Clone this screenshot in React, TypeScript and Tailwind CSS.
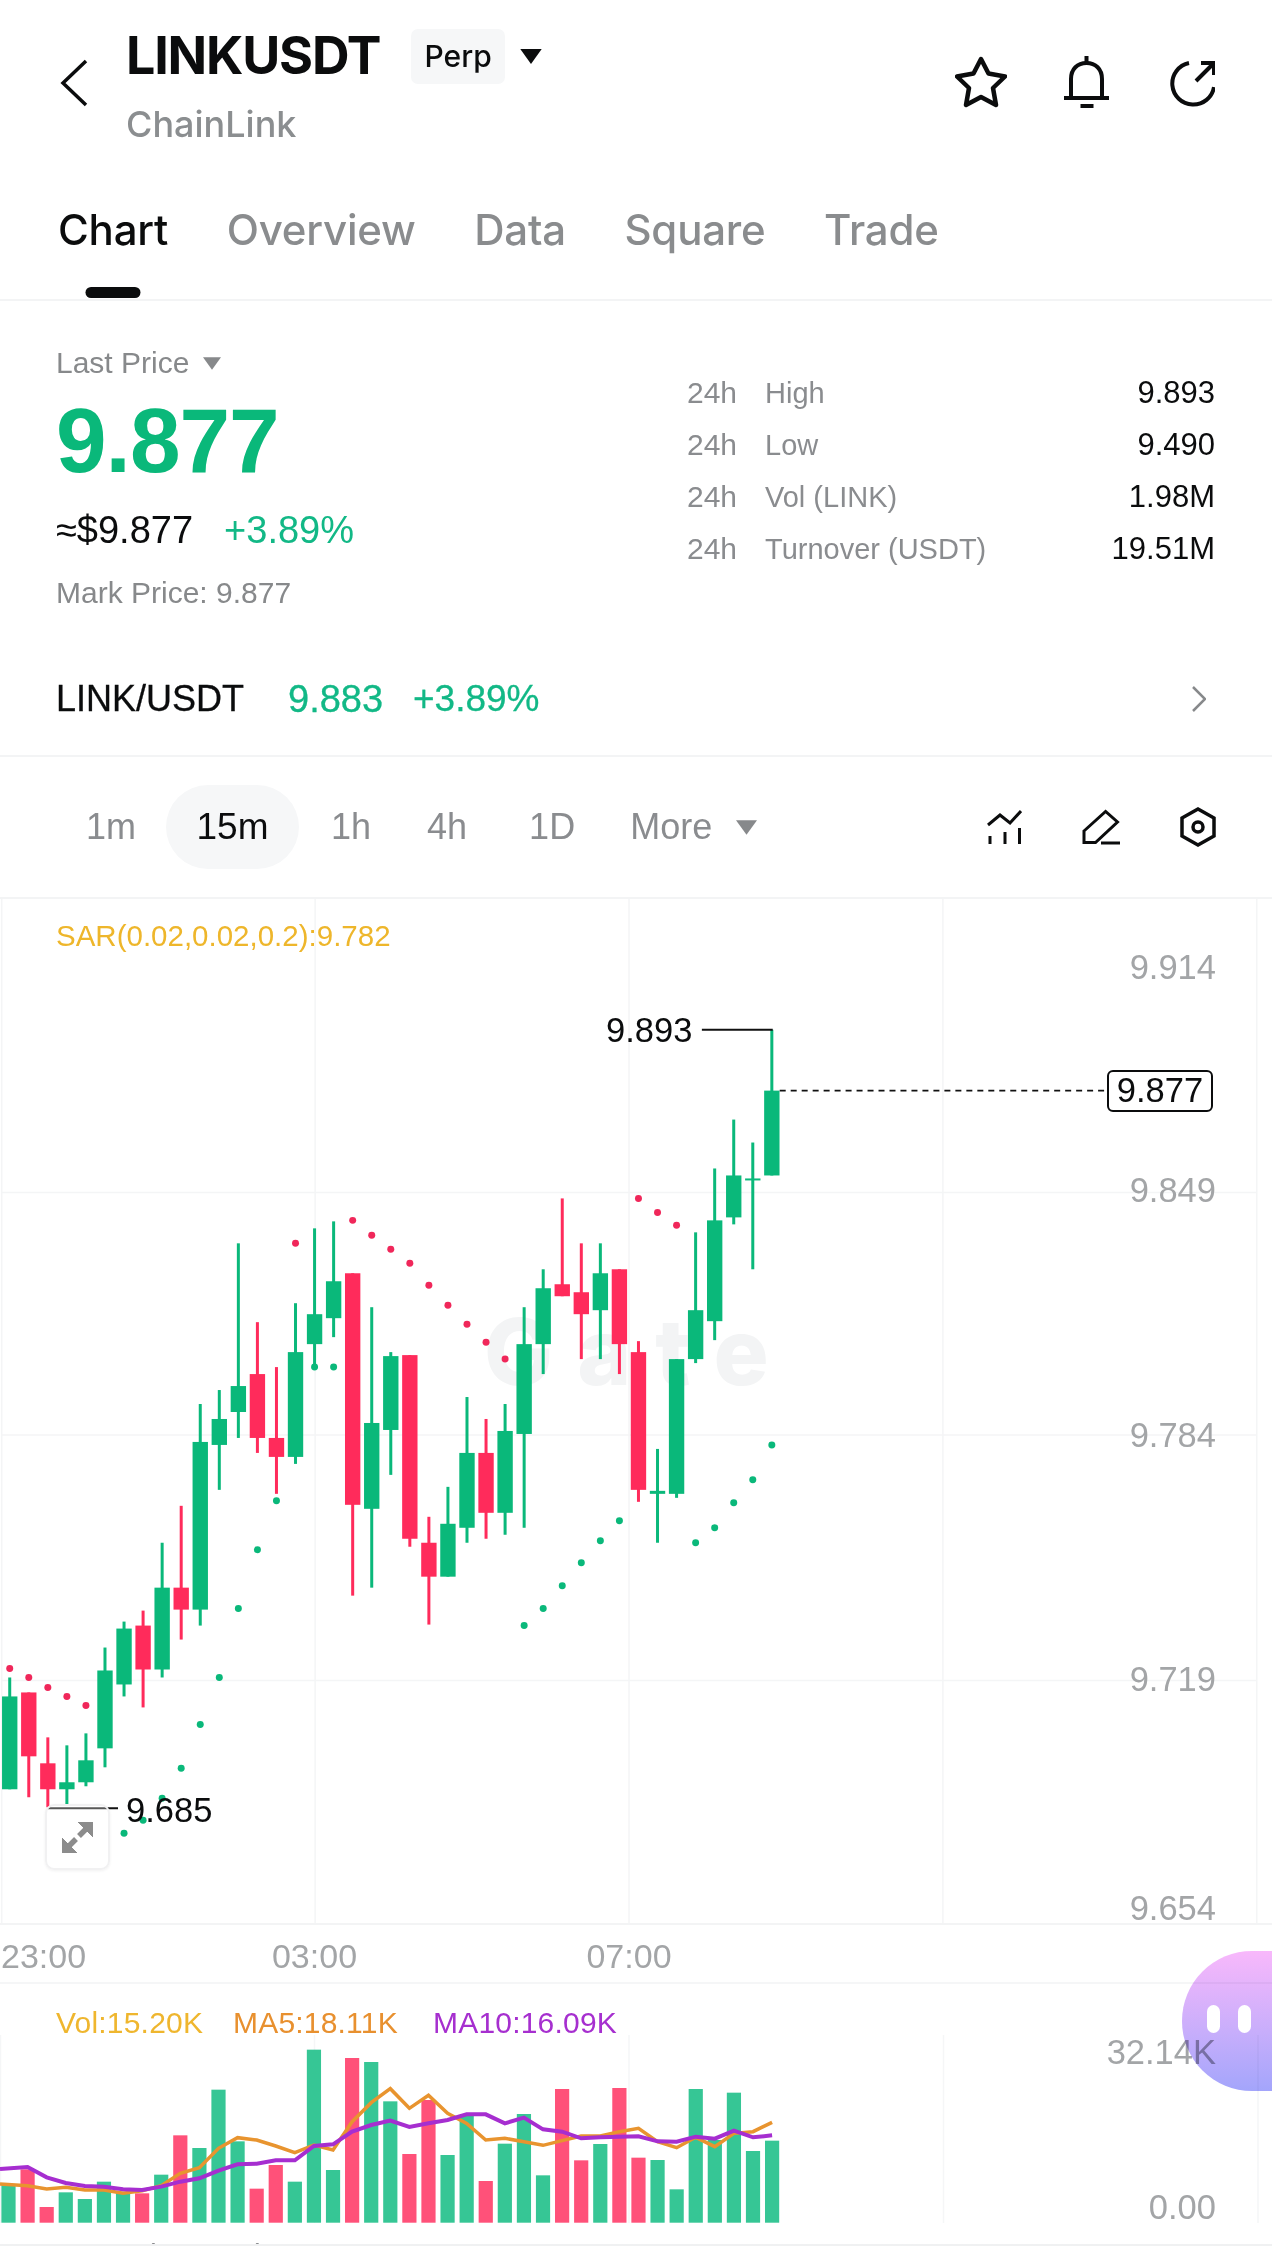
const candles: [number, number, number, number, number, "g" | "r"][] = [
  [0, 1679, 1698, 1791, 1791, "g"],
  [1, 1694, 1694, 1758, 1799, "r"],
  [2, 1739, 1765, 1791, 1809, "r"],
  [3, 1747, 1784, 1791, 1806, "g"],
  [4, 1735, 1762, 1784, 1788, "g"],
  [5, 1649, 1672, 1750, 1769, "g"],
  [6, 1623, 1630, 1686, 1698, "g"],
  [7, 1612, 1627, 1671, 1709, "r"],
  [8, 1544, 1589, 1671, 1679, "g"],
  [9, 1507, 1589, 1611, 1641, "r"],
  [10, 1405, 1443, 1611, 1627, "g"],
  [11, 1391, 1420, 1446, 1491, "g"],
  [12, 1244, 1387, 1413, 1439, "g"],
  [13, 1323, 1375, 1439, 1454, "r"],
  [14, 1368, 1439, 1458, 1495, "r"],
  [15, 1304, 1353, 1458, 1465, "g"],
  [16, 1229, 1315, 1345, 1368, "g"],
  [17, 1222, 1282, 1319, 1338, "g"],
  [18, 1274, 1274, 1506, 1597, "r"],
  [19, 1308, 1424, 1510, 1589, "g"],
  [20, 1353, 1357, 1431, 1476, "g"],
  [21, 1356, 1356, 1540, 1548, "r"],
  [22, 1518, 1544, 1578, 1626, "r"],
  [23, 1488, 1525, 1578, 1578, "g"],
  [24, 1398, 1454, 1529, 1544, "g"],
  [25, 1420, 1454, 1514, 1540, "r"],
  [26, 1405, 1432, 1514, 1536, "g"],
  [27, 1308, 1345, 1435, 1529, "g"],
  [28, 1270, 1289, 1345, 1375, "g"],
  [29, 1199, 1285, 1297, 1297, "r"],
  [30, 1244, 1293, 1315, 1360, "r"],
  [31, 1244, 1274, 1311, 1360, "g"],
  [32, 1270, 1270, 1345, 1375, "r"],
  [33, 1342, 1353, 1491, 1503, "r"],
  [34, 1450, 1492, 1495, 1544, "g"],
  [35, 1360, 1360, 1495, 1499, "g"],
  [36, 1233, 1311, 1360, 1364, "g"],
  [37, 1169, 1221, 1322, 1341, "g"],
  [38, 1120, 1176, 1218, 1225, "g"],
  [39, 1143, 1179, 1181, 1270, "g"],
  [40, 1030, 1091, 1176, 1176, "g"],
];

// sar dots as candle index + y
const sarRed: [number, number][] = [
  [0, 1670], [1, 1679], [2, 1689], [3, 1698], [4, 1707],
  [15, 1244], [18, 1221], [19, 1236], [20, 1250], [21, 1264], [22, 1286], [23, 1306], [24, 1325], [25, 1343], [26, 1360],
  [33, 1199], [34, 1213], [35, 1226],
];
const sarGreen: [number, number][] = [
  [6, 1835], [7, 1822], [8, 1800], [9, 1770], [10, 1726], [11, 1679], [12, 1610], [13, 1551], [14, 1502],
  [16, 1368], [17, 1368],
  [27, 1627], [28, 1610], [29, 1587], [30, 1564], [31, 1542], [32, 1522],
  [36, 1544], [37, 1529], [38, 1504], [39, 1481], [40, 1446],
];

const volBars: [number, "g" | "r"][] = [
  [853, "g"], [808, "r"], [921, "r"], [877, "g"], [897, "g"], [845, "g"], [875, "g"], [880, "r"], [824, "g"],
  [706, "r"], [744, "g"], [569, "g"], [724, "g"], [866, "r"], [795, "r"], [845, "g"], [449, "g"], [810, "g"],
  [474, "r"], [486, "g"], [604, "g"], [762, "r"], [600, "r"], [765, "g"], [645, "g"], [843, "r"], [731, "g"],
  [642, "g"], [826, "g"], [567, "r"], [781, "r"], [732, "g"], [564, "r"], [773, "r"], [780, "g"], [868, "g"],
  [567, "g"], [720, "g"], [578, "g"], [753, "g"], [722, "g"],
];
const ma5 = [852, 857, 867, 862, 870, 870, 880, 872, 857, 820, 803, 745, 713, 720, 738, 758, 735, 750, 665, 608, 566, 625, 586, 640, 670, 720, 715, 725, 736, 722, 708, 708, 695, 685, 725, 743, 712, 740, 700, 695, 667];
const ma10 = [807, 801, 832, 849, 858, 860, 868, 870, 860, 845, 835, 812, 793, 791, 781, 781, 738, 733, 695, 675, 662, 681, 670, 660, 643, 643, 670, 653, 688, 695, 715, 712, 710, 709, 724, 725, 710, 716, 692, 712, 706];

const GREEN = "#0ab87a";
const RED = "#ff2b5b";
const cx = (i: number) => 8.5 + i * 19.09;
const volY = (z: number) => 1900 + z / 3;
const toPoints = (line: number[]) => line.map((z, i) => `${i === 0 ? 0 : cx(i)},${volY(z)}`).join(" ");

const gridX = [0.5, 314.5, 629, 943.5, 1258];
const gridY = [1193, 1436, 1682];
const priceAxis: [string, number][] = [["9.914", 967], ["9.849", 1190], ["9.784", 1435], ["9.719", 1679], ["9.654", 1908]];

const stats = [
  ["High", "9.893"],
  ["Low", "9.490"],
  ["Vol (LINK)", "1.98M"],
  ["Turnover (USDT)", "19.51M"],
];

function Caret({ className }: { className: string }) {
  return (
    <svg viewBox="0 0 20 14" className={className} fill="currentColor">
      <path d="M0 0H20L10 14Z" />
    </svg>
  );
}

function CandleChart() {
  return (
    <svg viewBox="0 899 1272 1026" className="absolute inset-0 h-full w-full">
      {gridX.map((x) => (
        <line key={x} x1={x} x2={x} y1={899} y2={1925} stroke="#f4f5f6" strokeWidth="1.5" />
      ))}
      {gridY.map((y) => (
        <line key={y} x1={0} x2={1258} y1={y} y2={y} stroke="#f4f5f6" strokeWidth="1.5" />
      ))}
      {candles.map(([i, wt, bt, bb, wb, c]) => (
        <g key={i} fill={c === "g" ? GREEN : RED}>
          <rect x={cx(i) - 1.5} y={wt} width={3} height={wb - wt} />
          <rect x={cx(i) - 7.7} y={bt} width={15.4} height={bb - bt} />
        </g>
      ))}
      {sarRed.map(([i, y]) => (
        <circle key={`${i}-${y}`} cx={cx(i)} cy={y} r={3.5} fill="#f0275a" />
      ))}
      {sarGreen.map(([i, y]) => (
        <circle key={`${i}-${y}`} cx={cx(i)} cy={y} r={3.5} fill="#0ab87a" />
      ))}
      <line x1={702} x2={773} y1={1030} y2={1030} stroke="#111" strokeWidth="2" />
      <line x1={47} x2={117} y1={1810} y2={1810} stroke="#111" strokeWidth="2" />
      <line x1={780} x2={1106} y1={1091} y2={1091} stroke="#111" strokeWidth="2" strokeDasharray="6 5" />
    </svg>
  );
}

function VolumeChart() {
  return (
    <svg viewBox="0 1984 1272 253" className="absolute inset-0 h-full w-full">
      {gridX.map((x) => (
        <line key={x} x1={x} x2={x} y1={2035} y2={2223} stroke="#f5f6f7" strokeWidth="1.5" />
      ))}
      {volBars.map(([z, c], i) => (
        <rect
          key={i}
          x={cx(i) - 7.1}
          y={volY(z)}
          width={14.2}
          height={2222.7 - volY(z)}
          fill={c === "g" ? "#36c695" : "#ff5179"}
        />
      ))}
      <polyline points={toPoints(ma5)} fill="none" stroke="#e8942f" strokeWidth="3.5" />
      <polyline points={toPoints(ma10)} fill="none" stroke="#a62ed0" strokeWidth="4" />
    </svg>
  );
}

export default function App() {
  return (
    <div className="relative h-[2246px] w-[1272px] overflow-hidden border-b-2 border-[#f0f1f2] bg-white font-['Liberation_Sans',Arial,sans-serif] text-[#0b0c0d]">
      {/* header */}
      <header className="relative h-[301px] border-b-2 border-[#f3f4f5]">
        <div className="flex h-[151px] pl-[60px] pr-[57px]">
          <svg viewBox="0 0 28 48" className="mt-[59px] h-[48px] w-[28px]" fill="none" stroke="#0b0c0d" strokeWidth="3.5">
            <path d="M26 2L3 24L26 46" />
          </svg>
          <div className="ml-[38px] flex-1 pt-[26px] font-['Inter',sans-serif]">
            <div className="flex h-[60px] items-center">
              <h1 className="text-[52px] leading-[60px] font-bold tracking-[-1.2px]">LINKUSDT</h1>
              <span className="ml-[31px] flex h-[55px] w-[94px] items-center justify-center rounded-[7px] bg-[#f6f7f8] text-[30px] font-medium">
                Perp
              </span>
              <Caret className="ml-[15px] h-[15px] w-[22px] text-[#0b0c0d]" />
            </div>
            <p className="mt-[18px] text-[36px] leading-[40px] font-medium text-[#8b8e90]">ChainLink</p>
          </div>
          <div className="flex items-start pt-[56px]">
            <svg viewBox="0 0 52 52" className="h-[52px] w-[52px]" fill="none" stroke="#0b0c0d" strokeWidth="4.5" strokeLinejoin="round">
              <path d="M26 3L33.5 17.5L50 20.5L38 32L41 49L26 41L11 49L14 32L2 20.5L18.5 17.5Z" />
            </svg>
            <svg viewBox="0 0 45 52" className="ml-[57px] h-[52px] w-[45px]" fill="none" stroke="#0b0c0d" strokeWidth="4">
              <path d="M7 41V23C7 13 13.5 7 22.5 7S38 13 38 23V41" />
              <path d="M0 42H45M22.5 0V6M16.5 50H29.5" />
            </svg>
            <svg viewBox="0 0 46 48" className="ml-[60px] mt-[4px] h-[48px] w-[46px]" fill="none" stroke="#0b0c0d" strokeWidth="4">
              <path d="M20 3A21 21 0 1 0 45 27" />
              <path d="M27 21L44 4M32 3H45V15" />
            </svg>
          </div>
        </div>
        <nav className="flex gap-[58.5px] pl-[58px] pt-[53px] font-['Inter',sans-serif] text-[42px] leading-[52px] font-medium tracking-[-0.2px] text-[#8a8c8e]">
          <a className="relative text-[#0b0c0d]">
            Chart
            <span className="absolute top-[83px] left-1/2 h-[11px] w-[55px] -translate-x-1/2 rounded-full bg-[#0b0c0d]" />
          </a>
          <a>Overview</a>
          <a>Data</a>
          <a>Square</a>
          <a>Trade</a>
        </nav>
      </header>

      {/* price block */}
      <section className="flex h-[349px] justify-between pl-[56px] pr-[57px]">
        <div className="pt-[44px]">
          <div className="flex items-center text-[30px] leading-[36px] text-[#87898b]">
            Last Price
            <Caret className="ml-[14px] h-[13px] w-[18px] text-[#87898b]" />
          </div>
          <div className="mt-[15px] text-[91px] leading-[90px] font-bold tracking-[-1px] text-[#0ab87a]">9.877</div>
          <div className="mt-[22px] flex gap-[31px] text-[38px] leading-[44px]">
            <span>≈$9.877</span>
            <span className="text-[#12b886]">+3.89%</span>
          </div>
          <div className="mt-[23px] text-[30px] leading-[36px] text-[#87898b]">Mark Price: 9.877</div>
        </div>
        <div className="w-[528px] pt-[66px]">
          {stats.map(([label, value]) => (
            <div key={label} className="flex h-[52px] items-baseline text-[30px] leading-[52px]">
              <span className="w-[78px] text-[#8a8c8f]">24h</span>
              <span className="flex-1 text-[29px] text-[#8a8c8f]">{label}</span>
              <span className="text-[31px]">{value}</span>
            </div>
          ))}
        </div>
      </section>

      {/* spot row */}
      <section className="flex h-[107px] items-center border-b-2 border-[#f3f4f5] pb-[7px] pl-[56px] pr-[66px] [-webkit-text-stroke:0.3px_currentColor]">
        <span className="w-[232px] text-[36px]">LINK/USDT</span>
        <span className="w-[125px] text-[38px] text-[#12b886]">9.883</span>
        <span className="flex-1 text-[37px] text-[#12b886]">+3.89%</span>
        <svg viewBox="0 0 14 26" className="h-[26px] w-[14px]" fill="none" stroke="#87898b" strokeWidth="2.5">
          <path d="M1 1L13 13L1 25" />
        </svg>
      </section>

      {/* timeframes */}
      <section className="flex h-[142px] items-center justify-between border-b-2 border-[#f3f4f5] pl-[56px] pr-[56px] text-[36px] text-[#8a8c8f]">
        <div className="flex items-center">
          <span className="px-[30px]">1m</span>
          <span className="flex h-[84px] w-[133px] items-center justify-center rounded-full bg-[#f6f7f8] text-[37px] text-[#0b0c0d]">15m</span>
          <span className="pl-[32px] pr-[28px]">1h</span>
          <span className="px-[28px]">4h</span>
          <span className="pl-[34px] pr-[25px]">1D</span>
          <span className="pl-[30px]">More</span>
          <Caret className="ml-[24px] h-[15px] w-[21px] text-[#87898b]" />
        </div>
        <div className="flex items-center gap-[60px]">
          <svg viewBox="0 0 35 35" className="h-[35px] w-[35px]" fill="none" stroke="#0b0c0d" strokeWidth="3">
            <path d="M1 15L13 5L23 13L34 1M3 26V34M18 22V34M32.5 18V34" />
          </svg>
          <svg viewBox="0 0 38 36" className="h-[36px] w-[38px]" fill="none" stroke="#0b0c0d" strokeWidth="3">
            <path d="M2 22L23.6 2.5L35.5 13L13.5 33.5H2Z" />
            <path d="M19 34H38" />
          </svg>
          <svg viewBox="0 0 36 40" className="h-[40px] w-[36px]" fill="none" stroke="#0b0c0d" strokeWidth="3.5">
            <path d="M18 2L34 11V29L18 38L2 29V11Z" />
            <circle cx="18" cy="20" r="5" />
          </svg>
        </div>
      </section>

      {/* candles */}
      <section className="relative h-[1026px] border-b-2 border-[#f3f4f5]">
        <span className="absolute top-[403px] left-[484px] font-['Inter',sans-serif] text-[92px] leading-[100px] font-extrabold tracking-[24px] text-[#f3f4f5]">
          Gate
        </span>
        <CandleChart />
        <span className="absolute top-[19px] left-[56px] text-[29.5px] leading-[36px] text-[#eeb62b]">SAR(0.02,0.02,0.2):9.782</span>
        {priceAxis.map(([label, y]) => (
          <span
            key={label}
            className="absolute right-[56px] text-[34.5px] leading-[40px] text-[#a3a5a7]"
            style={{ top: y - 899 - 20 }}
          >
            {label}
          </span>
        ))}
        <span className="absolute top-[111px] left-[606px] text-[34.5px] leading-[40px]">9.893</span>
        <span className="absolute top-[171px] left-[1107px] flex h-[42px] w-[106px] items-center justify-center rounded-[6px] border-2 border-[#0b0c0d] bg-white text-[34.5px]">
          9.877
        </span>
        <span className="absolute top-[891px] left-[126px] text-[34.5px] leading-[40px]">9.685</span>
        <button className="absolute top-[905px] left-[45px] flex h-[66px] w-[65px] items-center justify-center rounded-[9px] border-2 border-[#f1f1f2] bg-white/30 shadow-[0_1px_3px_rgba(0,0,0,0.06)]">
          <svg viewBox="0 0 31 31" className="h-[31px] w-[31px]" fill="#8c8c8c" stroke="#8c8c8c">
            <path d="M31 0V15L16 0Z" />
            <path d="M0 31V16L15 31Z" />
            <path d="M24 7L17 14M7 24L14 17" strokeWidth="5.5" />
          </svg>
        </button>
      </section>

      {/* time axis */}
      <div className="flex h-[59px] items-center border-b-2 border-[#f5f6f7] pl-px pt-[5px] text-[34px] text-[#a3a5a7]">
        <span className="w-[313.5px]">23:00</span>
        <span className="w-[314.5px]"><span className="inline-block -translate-x-1/2">03:00</span></span>
        <span><span className="inline-block -translate-x-1/2">07:00</span></span>
      </div>

      {/* volume */}
      <section className="relative h-[253px]">
        <VolumeChart />
        <div className="absolute top-[21px] left-[56px] flex text-[30px] leading-[36px] tracking-[0.2px]">
          <span className="w-[177px] text-[#efb62e]">Vol:15.20K</span>
          <span className="w-[200px] text-[#e8902f]">MA5:18.11K</span>
          <span className="text-[#a62fcf]">MA10:16.09K</span>
        </div>
        <span className="absolute top-[48px] right-[56px] text-[34.5px] leading-[40px] text-[#a3a5a7]">32.14K</span>
        <span className="absolute top-[203px] right-[56px] text-[34.5px] leading-[40px] text-[#a3a5a7]">0.00</span>
      </section>
      <div className="flex pl-[57px] text-[30px] leading-[36px]">
        <span className="w-[240px] text-[#8a8c8f]">MACD(12,26,9)</span>
        <span className="w-[205px] text-[#efb62e]">MACD:0.005</span>
        <span className="w-[158px] text-[#d32fa5]">DIF:0.023</span>
        <span className="text-[#a62fcf]">DEA:0.018</span>
      </div>

      {/* floating assistant */}
      <div className="absolute top-[1951px] left-[1182px] flex h-[140px] w-[100px] gap-[18px] rounded-l-[70px] bg-linear-to-b from-[#f8b8fb] to-[#a3a5fb] pl-[25px] pt-[54px] mix-blend-multiply">
        <span className="h-[28px] w-[13px] rounded-full bg-white" />
        <span className="h-[28px] w-[13px] rounded-full bg-white" />
      </div>
    </div>
  );
}
